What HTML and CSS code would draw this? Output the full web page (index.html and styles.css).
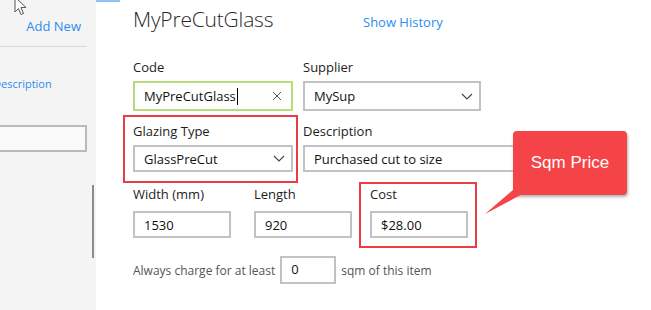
FILE: index.html
```html
<!DOCTYPE html>
<html>
<head>
<meta charset="utf-8">
<link rel="stylesheet" href="styles.css">
</head>
<body>
<div class="app">
  <aside class="sidebar">
    <svg class="cursor" width="14" height="20" viewBox="0 0 14 20"><path d="M1 1 L1 16 L4.5 12.5 L7 18.5 L9.5 17.5 L7 11.5 L12 11.5 Z" fill="#fff" stroke="#555" stroke-width="1"/></svg>
    <div class="add-row"><a class="link add-new">Add New</a></div>
    <div class="side-sep"></div>
    <div class="side-desc link">Description</div>
    <div class="side-input"></div>
    <div class="scroll-thumb"></div>
  </aside>
  <main class="main">
    <div class="tab-line"></div>
    <div class="title-row">
      <h1 class="title">MyPreCutGlass</h1>
      <a class="link history">Show History</a>
    </div>
    <div class="row row-1">
      <div class="field f-code">
        <label>Code</label>
        <div class="box box-focus"><span class="val">MyPreCutGlass<span class="caret"></span></span><svg class="clear" width="10" height="10" viewBox="0 0 10 10"><path d="M1 1 L9 9 M9 1 L1 9" stroke="#555" stroke-width="1"/></svg></div>
      </div>
      <div class="field f-supplier">
        <label>Supplier</label>
        <div class="box"><span class="val">MySup</span><svg class="chev" width="12" height="7" viewBox="0 0 12 7"><path d="M1 1 L6 6 L11 1" fill="none" stroke="#444" stroke-width="1.1"/></svg></div>
      </div>
    </div>
    <div class="row row-2">
      <div class="field f-glazing hl">
        <label>Glazing Type</label>
        <div class="box"><span class="val">GlassPreCut</span><svg class="chev" width="12" height="7" viewBox="0 0 12 7"><path d="M1 1 L6 6 L11 1" fill="none" stroke="#444" stroke-width="1.1"/></svg></div>
      </div>
      <div class="field f-desc">
        <label>Description</label>
        <div class="box"><span class="val">Purchased cut to size</span></div>
      </div>
    </div>
    <div class="row row-3">
      <div class="field f-small">
        <label>Width (mm)</label>
        <div class="box"><span class="val">1530</span></div>
      </div>
      <div class="field f-small">
        <label>Length</label>
        <div class="box"><span class="val">920</span></div>
      </div>
      <div class="field f-small f-cost hl2">
        <label>Cost</label>
        <div class="box"><span class="val">$28.00</span></div>
      </div>
    </div>
    <div class="row row-4">
      <span class="muted">Always charge for at least</span>
      <div class="box box-min"><span class="val">0</span></div>
      <span class="muted">sqm of this item</span>
    </div>
    <div class="callout">
      <span>Sqm Price</span>
      <svg class="tail" width="34" height="26" viewBox="0 0 34 26"><path d="M28 0 L45 0 L0 24 Z" fill="#f44447"/></svg>
    </div>
  </main>
</div>
</body>
</html>
```
FILE: styles.css
```css
* { box-sizing: border-box; }
html, body { margin: 0; padding: 0; background: #fff; }
body {
  width: 651px; height: 310px; overflow: hidden;
  font-family: "Open Sans", "Noto Sans", sans-serif;
  font-size: 13px; color: #1b1b1b;
}
.app { display: flex; height: 310px; }
.link { color: #2b8def; text-decoration: none; }

.sidebar {
  position: relative;
  width: 96px; flex: none;
  background: #f4f4f4;
  display: flex; flex-direction: column;
}
.cursor { position: absolute; left: 14px; top: -4px; }
.add-row { display: flex; justify-content: flex-end; padding: 17px 15px 0 0; height: 46px; }
.add-new { font-size: 13px; }
.side-sep { height: 1px; background: #d9d9d9; width: 87px; }
.side-desc { margin: 29px 0 0 -7px; font-size: 11px; white-space: nowrap; }
.side-input {
  margin: 34px 0 0 -2px; width: 89px; height: 27px;
  border: 2px solid #b9b9b9; background: #f9f9f9;
}
.scroll-thumb { position: absolute; left: 92px; top: 185px; width: 2px; height: 73px; background: #8a8a8a; }

.main { position: relative; flex: 1; padding-left: 37px; }
.tab-line { position: absolute; left: 0; top: 0; width: 24px; height: 2px; background: #8cc3f5; }
.title-row { display: flex; align-items: baseline; height: 50px; padding-top: 5px; }
.title { margin: 0; font-weight: 300; font-size: 21px; color: #2a2a2a; width: 230px; letter-spacing: -0.2px; }
.history { font-size: 13px; }

.row { display: flex; }
.row-1 { margin-top: 8px; gap: 10px; }
.row-2 { margin-top: 11px; gap: 10px; }
.row-3 { margin-top: 13px; gap: 23px; }
.row-4 { margin-top: 18px; align-items: center; gap: 5px; }

.field { position: relative; display: flex; flex-direction: column; }
.field label { font-size: 13px; line-height: 18px; margin-bottom: 5px; color: #1d1d1d; }
.row-3 .field label { margin-bottom: 8px; }
.box {
  display: flex; align-items: center; justify-content: space-between;
  height: 30px; border: 2px solid #c2c2c2; background: #fff;
  padding: 0 4px 0 9px;
}
.val { font-size: 13px; color: #111; display: flex; align-items: center; }
.caret { display: inline-block; width: 1px; height: 17px; background: #000; margin-left: 1px; }
.box-focus { border-color: #b9dc7a; }
.clear { margin-right: 5px; }
.chev { margin-right: 2px; }

.f-code { width: 160px; }
.f-supplier { width: 178px; }
.f-glazing { width: 160px; }
.f-desc { width: 240px; }
.row-2 .box { height: 27px; }
.f-small { width: 98px; }
.f-small .box { height: 27px; }
.f-cost { margin-left: -5px; }

.hl::before {
  content: ""; position: absolute;
  left: -10px; right: -5px; top: -7px; bottom: -11px;
  border: 2px solid #ea3d43;
}
.hl2::before {
  content: ""; position: absolute;
  left: -11px; right: -9px; top: -3px; bottom: -10px;
  border: 2px solid #ea3d43;
}
.muted { color: #555; font-size: 12px; }
.box-min { width: 56px; height: 28px; justify-content: flex-start; align-items: flex-start; padding-top: 2px; }

.callout {
  position: absolute; left: 417px; top: 131px;
  width: 114px; height: 64px; border-radius: 4px;
  background: #f44447;
  box-shadow: 1px 2px 3px rgba(0,0,0,0.3);
  display: flex; align-items: center; justify-content: center;
  font-family: "Liberation Sans", Arial, sans-serif;
  font-size: 17px; color: #fff;
}
.tail { position: absolute; left: -28px; top: 59px; overflow: visible; }
```
